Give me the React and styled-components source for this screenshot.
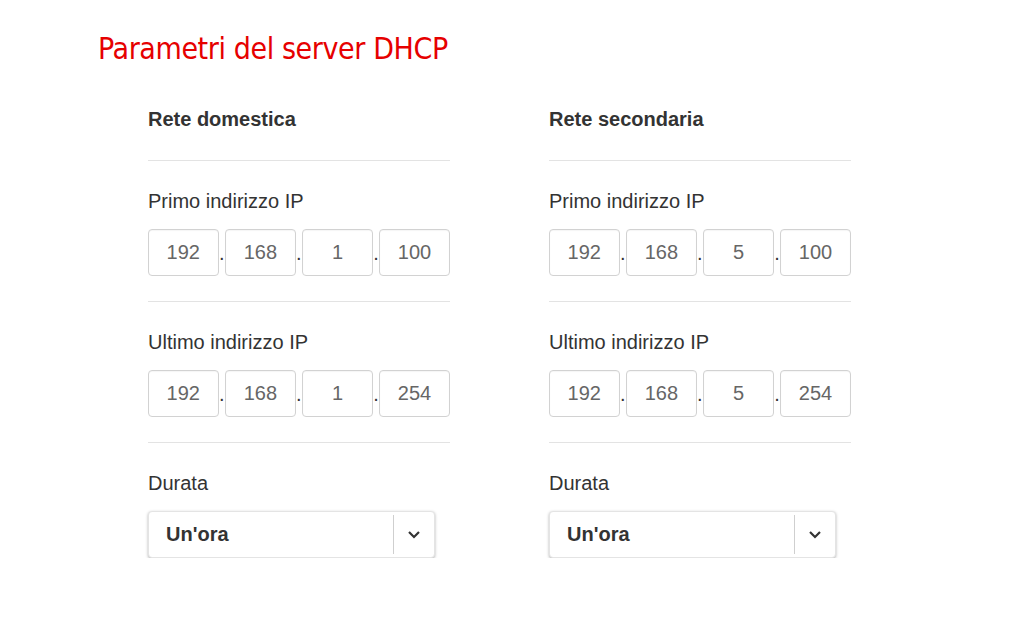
import React from "react";
import styled, { createGlobalStyle } from "styled-components";

const Global = createGlobalStyle`
  html, body { margin: 0; padding: 0; background: #fff; }
  body { font-family: "Liberation Sans", Arial, sans-serif; color: #333; }
`;

const Page = styled.div`
  padding-top: 29px;
  width: 1015px;
`;

const Title = styled.h1`
  margin: 0 0 0 98px;
  font-family: "DejaVu Sans Condensed", "Liberation Sans", sans-serif;
  font-weight: 400;
  font-size: 30px;
  line-height: 40px;
  color: #e60000;
  letter-spacing: -0.4px;
`;

const Columns = styled.div`
  display: grid;
  grid-template-columns: 302px 302px;
  column-gap: 99px;
  margin: 38px 0 0 148px;
`;

const Column = styled.div`
  display: flex;
  flex-direction: column;
`;

const Heading = styled.h2`
  margin: 0;
  font-size: 20px;
  line-height: 24px;
  font-weight: 700;
  color: #333;
  padding-bottom: 29px;
  border-bottom: 1px solid #e3e3e3;
`;

const Section = styled.div`
  padding: 28px 0 ${(p) => (p.$last ? "0" : "25px")};
  border-bottom: ${(p) => (p.$last ? "none" : "1px solid #e3e3e3")};
`;

const Label = styled.div`
  font-size: 20px;
  line-height: 24px;
  color: #333;
  margin-bottom: 16px;
`;

const IpRow = styled.div`
  display: flex;
  align-items: flex-end;
`;

const Octet = styled.div`
  box-sizing: border-box;
  width: 70.5px;
  height: 47px;
  border: 1px solid #d2d2d2;
  border-radius: 4px;
  box-shadow: inset 0 1px 1px rgba(0, 0, 0, 0.04);
  display: flex;
  align-items: center;
  justify-content: center;
  font-size: 20px;
  color: #666;
`;

const Dot = styled.span`
  width: 6.6px;
  text-align: center;
  font-size: 20px;
  line-height: 1;
  color: #333;
  padding-bottom: 13px;
`;

const Select = styled.div`
  box-sizing: border-box;
  width: 287px;
  height: 47px;
  border: 1px solid #e4e4e4;
  border-radius: 4px;
  background: #fff;
  box-shadow: 0 1px 3px rgba(0, 0, 0, 0.3);
  display: flex;
  align-items: stretch;
`;

const SelectValue = styled.div`
  flex: 1;
  display: flex;
  align-items: center;
  padding-left: 17px;
  font-size: 20px;
  font-weight: 700;
  color: #333;
`;

const SelectArrow = styled.div`
  width: 40px;
  margin: 3px 0;
  border-left: 1px solid #cfcfcf;
  display: flex;
  align-items: center;
  justify-content: center;
`;

const Chevron = () => (
  <svg width="14" height="9" viewBox="0 0 14 9">
    <path d="M2 2 L7 7 L12 2" fill="none" stroke="#333" strokeWidth="2.2" />
  </svg>
);

const Ip = ({ parts }) => (
  <IpRow>
    {parts.map((p, i) => (
      <React.Fragment key={i}>
        {i > 0 && <Dot>.</Dot>}
        <Octet>{p}</Octet>
      </React.Fragment>
    ))}
  </IpRow>
);

const NetworkColumn = ({ title, third }) => (
  <Column>
    <Heading>{title}</Heading>
    <Section>
      <Label>Primo indirizzo IP</Label>
      <Ip parts={["192", "168", third, "100"]} />
    </Section>
    <Section>
      <Label>Ultimo indirizzo IP</Label>
      <Ip parts={["192", "168", third, "254"]} />
    </Section>
    <Section $last>
      <Label>Durata</Label>
      <Select>
        <SelectValue>Un'ora</SelectValue>
        <SelectArrow>
          <Chevron />
        </SelectArrow>
      </Select>
    </Section>
  </Column>
);

export default function App() {
  return (
    <Page>
      <Global />
      <Title>Parametri del server DHCP</Title>
      <Columns>
        <NetworkColumn title="Rete domestica" third="1" />
        <NetworkColumn title="Rete secondaria" third="5" />
      </Columns>
    </Page>
  );
}
